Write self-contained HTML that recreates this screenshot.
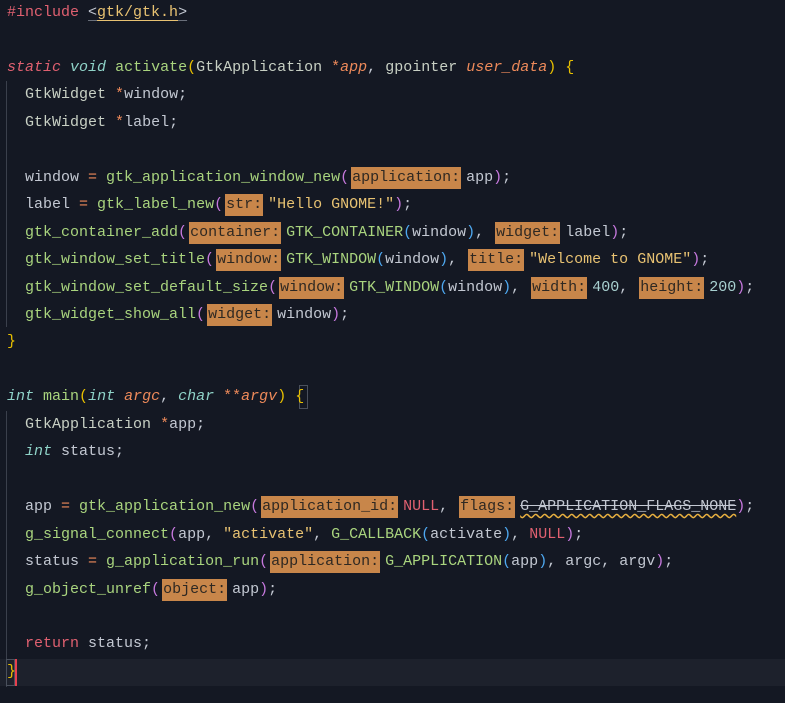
<!DOCTYPE html>
<html><head><meta charset="utf-8"><style>
html,body{margin:0;padding:0;background:#141823;width:785px;height:703px;overflow:hidden}
#c{position:relative;width:785px;height:703px;font-family:"Liberation Mono","DejaVu Sans Mono",monospace;font-size:15px;color:#c3c8d2}
.l{position:absolute;left:7px;height:27.45px;line-height:27.45px;white-space:pre}
.kw{color:#e06070}
.kwi{color:#e06070;font-style:italic}
.ty{color:#8fd3c8;font-style:italic}
.fn{color:#a9d47e}
.tn{color:#c8d0c4}
.pa{color:#ee8a5a;font-style:italic}
.op{color:#ee8a5a}
.st{color:#e8c272}
.nu{color:#a8d0d0}
.nl{color:#e06070}
.mac{color:#a9d47e}
.p1{color:#c678dd}
.p2{color:#4ea8f0}
.p0{color:#e8c000}
.h{display:inline-block;background:#c8864a;color:#2e2822;height:22px;line-height:22px;padding:0 1px;margin:0 5px 0 2px;vertical-align:0}
.cur{position:absolute;left:0;width:785px;top:659px;height:27px;background:#1d212c}
.g{position:absolute;left:6px;width:1px;background:#3b404c}
</style></head><body><div id="c">
<div class="cur"></div>
<div class="g" style="top:81px;height:246px"></div>
<div class="g" style="top:411px;height:276px"></div>
<div style="position:absolute;left:6px;top:659px;width:9px;height:27px;border:1px solid #4a505c;box-sizing:border-box"></div>
<div style="position:absolute;left:15px;top:659px;width:2px;height:27px;background:#e8404e"></div>
<div style="position:absolute;left:299px;top:385px;width:9px;height:24px;border:1px solid #4a505c;box-sizing:border-box"></div>

<div class="l" style="top:-1px"><span class="kw">#include</span> <span style="text-decoration:underline;text-decoration-color:#6a6f7a;text-underline-offset:4px">&lt;<span class="st" style="text-decoration:underline;text-decoration-color:#e8c272;text-underline-offset:4px">gtk/gtk.h</span>&gt;</span></div>
<div class="l" style="top:53.9px"><span class="kwi">static</span> <span class="ty">void</span> <span class="fn">activate</span><span class="p0">(</span><span class="tn">GtkApplication</span> <span class="op">*</span><span class="pa">app</span>, <span class="tn">gpointer</span> <span class="pa">user_data</span><span class="p0">)</span> <span class="p0">{</span></div>
<div class="l" style="top:81.4px">  <span class="tn">GtkWidget</span> <span class="op">*</span>window;</div>
<div class="l" style="top:108.8px">  <span class="tn">GtkWidget</span> <span class="op">*</span>label;</div>
<div class="l" style="top:163.7px">  window <span class="op">=</span> <span class="fn">gtk_application_window_new</span><span class="p1">(</span><span class="h">application:</span>app<span class="p1">)</span>;</div>
<div class="l" style="top:191.2px">  label <span class="op">=</span> <span class="fn">gtk_label_new</span><span class="p1">(</span><span class="h">str:</span><span class="st">"Hello GNOME!"</span><span class="p1">)</span>;</div>
<div class="l" style="top:218.6px">  <span class="fn">gtk_container_add</span><span class="p1">(</span><span class="h">container:</span><span class="mac">GTK_CONTAINER</span><span class="p2">(</span>window<span class="p2">)</span>, <span class="h">widget:</span>label<span class="p1">)</span>;</div>
<div class="l" style="top:246.1px">  <span class="fn">gtk_window_set_title</span><span class="p1">(</span><span class="h">window:</span><span class="mac">GTK_WINDOW</span><span class="p2">(</span>window<span class="p2">)</span>, <span class="h">title:</span><span class="st">"Welcome to GNOME"</span><span class="p1">)</span>;</div>
<div class="l" style="top:273.5px">  <span class="fn">gtk_window_set_default_size</span><span class="p1">(</span><span class="h">window:</span><span class="mac">GTK_WINDOW</span><span class="p2">(</span>window<span class="p2">)</span>, <span class="h">width:</span><span class="nu">400</span>, <span class="h">height:</span><span class="nu">200</span><span class="p1">)</span>;</div>
<div class="l" style="top:301px">  <span class="fn">gtk_widget_show_all</span><span class="p1">(</span><span class="h">widget:</span>window<span class="p1">)</span>;</div>
<div class="l" style="top:328.4px"><span class="p0">}</span></div>
<div class="l" style="top:383.3px"><span class="ty">int</span> <span class="fn">main</span><span class="p0">(</span><span class="ty">int</span> <span class="pa">argc</span>, <span class="ty">char</span> <span class="op">**</span><span class="pa">argv</span><span class="p0">)</span> <span class="p0">{</span></div>
<div class="l" style="top:410.8px">  <span class="tn">GtkApplication</span> <span class="op">*</span>app;</div>
<div class="l" style="top:438.2px">  <span class="ty">int</span> status;</div>
<div class="l" style="top:493.1px">  app <span class="op">=</span> <span class="fn">gtk_application_new</span><span class="p1">(</span><span class="h">application_id:</span><span class="nl">NULL</span>, <span class="h">flags:</span><span style="text-decoration:underline wavy #e8b040;text-underline-offset:3px"><span style="text-decoration:line-through #c3c8d2">G_APPLICATION_FLAGS_NONE</span></span><span class="p1">)</span>;</div>
<div class="l" style="top:520.6px">  <span class="fn">g_signal_connect</span><span class="p1">(</span>app, <span class="st">"activate"</span>, <span class="mac">G_CALLBACK</span><span class="p2">(</span>activate<span class="p2">)</span>, <span class="nl">NULL</span><span class="p1">)</span>;</div>
<div class="l" style="top:548px">  status <span class="op">=</span> <span class="fn">g_application_run</span><span class="p1">(</span><span class="h">application:</span><span class="mac">G_APPLICATION</span><span class="p2">(</span>app<span class="p2">)</span>, argc, argv<span class="p1">)</span>;</div>
<div class="l" style="top:575.5px">  <span class="fn">g_object_unref</span><span class="p1">(</span><span class="h">object:</span>app<span class="p1">)</span>;</div>
<div class="l" style="top:630.4px">  <span class="kw">return</span> status;</div>
<div class="l" style="top:657.8px"><span class="p0">}</span></div>
</div></body></html>
